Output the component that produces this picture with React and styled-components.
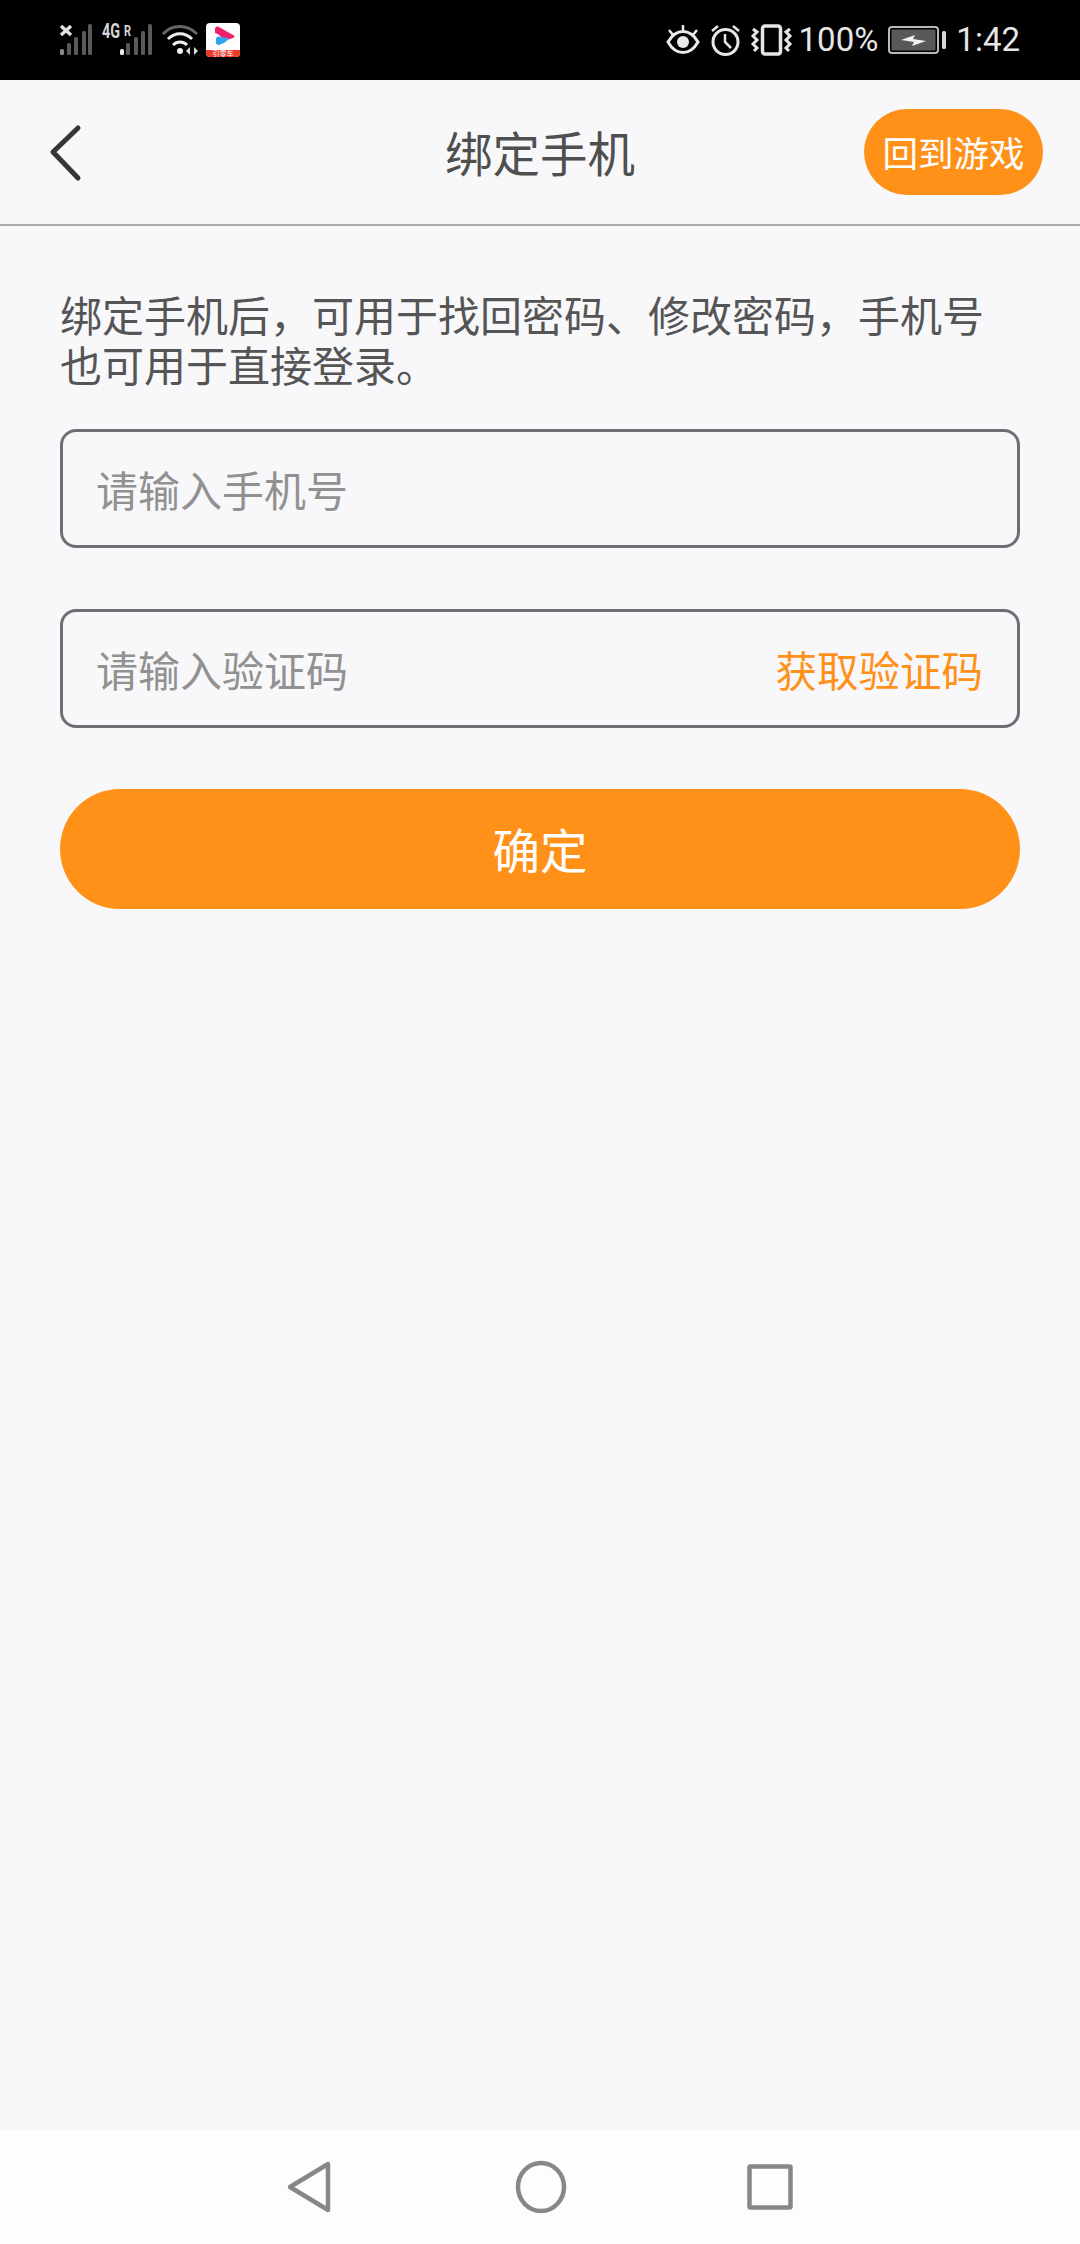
import React from "react"
import styled, { createGlobalStyle } from "styled-components"

const GlobalStyle = createGlobalStyle`
  html, body { margin: 0; padding: 0; background: #f8f8fb; }
  * { box-sizing: border-box; }
  body { font-family: "Noto Sans CJK SC", "Noto Sans", sans-serif; }
`

const ORANGE = "#ff9119"

const Page = styled.div`
  width: 1080px;
  height: 2244px;
  display: flex;
  flex-direction: column;
  background: #f8f8fb;
`

const StatusBar = styled.div`
  height: 80px;
  flex: none;
  background: #000;
  padding: 0 60px;
  display: flex;
  align-items: center;
  justify-content: space-between;
  color: #e6e6e6;
  font-family: Roboto, "Liberation Sans", sans-serif;
  font-size: 33px;
`

const StatusGroup = styled.div`
  display: flex;
  align-items: center;
  gap: 10px;
`

const Percent = styled.span`
  margin-left: -3px;
  line-height: 40px;
`

const Clock = styled.span`
  line-height: 40px;
`

const Glyph = styled.svg`
  display: block;
  flex: none;
  overflow: visible;
`

const BadgeGlyph = styled(Glyph)`
  margin-left: -3px;
`

const Header = styled.header`
  height: 146px;
  flex: none;
  display: grid;
  grid-template-columns: 1fr auto 1fr;
  align-items: center;
  padding: 0 37px;
  border-bottom: 2px solid #adadad;
`

const BackButton = styled.button`
  justify-self: start;
  margin-left: 11px;
  padding: 0;
  border: none;
  background: none;
  display: block;
`

const Title = styled.h1`
  margin: 0;
  font-size: 47.5px;
  font-weight: 400;
  line-height: 60px;
  color: #4f4f4f;
`

const BackToGame = styled.button`
  justify-self: end;
  width: 179px;
  height: 86px;
  border: none;
  border-radius: 43px;
  padding: 0 0 2px;
  background: ${ORANGE};
  color: #fff;
  font-family: inherit;
  font-size: 35.5px;
  white-space: nowrap;
`

const Main = styled.main`
  flex: 1;
  padding: 63px 60px 0;
`

const Intro = styled.p`
  margin: 0 0 40px;
  font-size: 42px;
  line-height: 50px;
  color: #555;
`

const Field = styled.div`
  height: 119px;
  margin-bottom: 61px;
  padding: 0 34px 0 33px;
  display: flex;
  align-items: center;
  border: 3px solid #6f6f73;
  border-radius: 16px;
`

const Input = styled.input`
  flex: 1;
  min-width: 0;
  padding: 0;
  border: none;
  outline: none;
  background: transparent;
  font-family: inherit;
  font-size: 42px;
  color: #444;
  &::placeholder { color: #919191; opacity: 1; }
`

const GetCode = styled.span`
  font-size: 41.5px;
  color: ${ORANGE};
  white-space: nowrap;
`

const Confirm = styled.button`
  display: block;
  width: 100%;
  height: 120px;
  border: none;
  border-radius: 60px;
  padding: 0 0 2px;
  background: ${ORANGE};
  color: #fff;
  font-family: inherit;
  font-size: 47.5px;
`

const NavBar = styled.nav`
  height: 114px;
  flex: none;
  background: #fdfdfd;
  display: grid;
  grid-template-columns: 286px 229px 232px 46px;
  align-items: center;
`

const NavIcon = styled.svg`
  display: block;
  grid-column: ${(p) => p.$col};
  fill: none;
  stroke: #878787;
  stroke-width: 4.5;
  stroke-linejoin: round;
`

const Bars = ({ x, dot }) => {
  const heights = [31, 24, 18, 12, 6]
  return (
    <>
      {x.map((bx, i) => (
        <rect
          key={bx}
          x={bx}
          y={31 - heights[4 - i]}
          width="4"
          height={heights[4 - i]}
          rx="1.5"
          fill={i === 0 ? dot : "#5a5a5a"}
        />
      ))}
    </>
  )
}

const SimOne = () => (
  <Glyph width="32" height="32" viewBox="0 0 32 32">
    <path d="M1 2 L11 11 M11 2 L1 11" stroke="#e0e0e0" strokeWidth="3.5" />
    <Bars x={[0, 7, 14, 22, 28]} dot="#8a8a8a" />
  </Glyph>
)

const SimTwo = () => (
  <Glyph width="50" height="32" viewBox="0 0 50 32">
    <text x="0" y="14" fontFamily="Roboto, sans-serif" fontWeight="700" fontSize="20" fill="#d8d8d8" textLength="18" lengthAdjust="spacingAndGlyphs">4G</text>
    <text x="22" y="12" fontFamily="Roboto, sans-serif" fontWeight="700" fontSize="15" fill="#d8d8d8" textLength="7" lengthAdjust="spacingAndGlyphs">R</text>
    <Bars x={[18, 24, 32, 39, 46]} dot="#e8e8e8" />
  </Glyph>
)

const Wifi = () => (
  <Glyph width="37" height="32" viewBox="0 0 37 32">
    <path d="M1 10 C10 0 25 0 35 10" stroke="#666" strokeWidth="3" fill="none" />
    <path d="M6 15 C13 8 23 8 30 15" stroke="#eee" strokeWidth="3" fill="none" />
    <path d="M11 21 C15 17 21 17 25 21" stroke="#eee" strokeWidth="3" fill="none" />
    <circle cx="18" cy="27" r="3" fill="#eee" />
    <path d="M24 27 L28 23 V31 Z M36 27 L32 23 V31 Z" fill="#ddd" />
  </Glyph>
)

const AppBadge = () => (
  <BadgeGlyph width="34" height="34" viewBox="0 0 34 34">
    <rect width="34" height="34" rx="4" fill="#fff" />
    <path d="M0 27 H34 V30 a4 4 0 0 1 -4 4 H4 a4 4 0 0 1 -4 -4 Z" fill="#ee3a2c" />
    <path d="M9 6 C9 4 11 3 13 4 L27 12 C29 13 29 14 27 15 L18 18 C16 14 13 11 9 10 Z" fill="#f01f6b" />
    <path d="M10 16 C10 14 12 13 14 14 L23 15 C21 19 16 21 13 22 C11 22 10 21 10 20 Z" fill="#30a6ee" />
    <text x="17" y="33" textAnchor="middle" fontSize="7" fill="#fff" fontFamily="'Noto Sans CJK SC', sans-serif">引零车</text>
  </BadgeGlyph>
)

const Eye = () => (
  <Glyph width="34" height="32" viewBox="0 0 34 32" fill="none" stroke="#eaeaea" strokeWidth="3">
    <path d="M2 18 C10 4 24 4 32 18 C24 32 10 32 2 18 Z" />
    <circle cx="17" cy="18" r="6" fill="#eaeaea" stroke="none" />
    <path d="M17 1 V7 M3 6 L7 11 M31 6 L27 11" strokeWidth="2.5" />
  </Glyph>
)

const Alarm = () => (
  <Glyph width="31" height="32" viewBox="0 0 31 32" fill="none" stroke="#e6e6e6" strokeWidth="3">
    <circle cx="15.5" cy="18" r="12.5" />
    <path d="M15 10 V18 L21 24" strokeWidth="2.5" />
    <path d="M2 7 L8 2 M29 7 L23 2" strokeWidth="2.5" />
  </Glyph>
)

const Vibrate = () => (
  <Glyph width="41" height="32" viewBox="0 0 41 32" fill="none" stroke="#e6e6e6" strokeWidth="3.5">
    <rect x="11.5" y="2" width="18" height="28" rx="2.5" />
    <path d="M2 5 L6 8 L2 12 L6 16 L2 20 L6 24 L3 27" strokeWidth="3" />
    <path d="M39 5 L35 8 L39 12 L35 16 L39 20 L35 24 L38 27" strokeWidth="3" />
  </Glyph>
)

const Battery = () => (
  <Glyph width="58" height="28" viewBox="0 0 58 28">
    <rect x="1" y="1" width="49" height="26" rx="3" fill="#000" stroke="#b8b8b8" strokeWidth="2" />
    <rect x="3.5" y="3.5" width="44" height="21" rx="1" fill="#585858" />
    <path d="M13 14 L27 9 L25 13 L38 15 L24 20 L26 16 Z" fill="#f2f2f2" />
    <rect x="54" y="5" width="4" height="18" rx="1.5" fill="#d8d8d8" />
  </Glyph>
)

const App = () => {
  return (
    <Page>
      <GlobalStyle />
      <StatusBar>
        <StatusGroup>
          <SimOne />
          <SimTwo />
          <Wifi />
          <AppBadge />
        </StatusGroup>
        <StatusGroup>
          <Eye />
          <Alarm />
          <Vibrate />
          <Percent>100%</Percent>
          <Battery />
          <Clock>1:42</Clock>
        </StatusGroup>
      </StatusBar>

      <Header>
        <BackButton aria-label="返回">
          <Glyph width="36" height="60" viewBox="0 0 36 60" fill="none">
            <path d="M30 6 L5 30 L30 56" stroke="#363636" strokeWidth="5" strokeLinecap="round" strokeLinejoin="round" />
          </Glyph>
        </BackButton>
        <Title>绑定手机</Title>
        <BackToGame>回到游戏</BackToGame>
      </Header>

      <Main>
        <Intro>绑定手机后，可用于找回密码、修改密码，手机号也可用于直接登录。</Intro>
        <Field>
          <Input placeholder="请输入手机号" />
        </Field>
        <Field>
          <Input placeholder="请输入验证码" />
          <GetCode>获取验证码</GetCode>
        </Field>
        <Confirm>确定</Confirm>
      </Main>

      <NavBar>
        <NavIcon $col={2} width="46" height="54" viewBox="0 0 46 54">
          <path d="M42 4 V50 L4 27 Z" />
        </NavIcon>
        <NavIcon $col={3} width="52" height="54" viewBox="0 0 52 54">
          <ellipse cx="26" cy="27" rx="23" ry="24" />
        </NavIcon>
        <NavIcon $col={4} width="46" height="46" viewBox="0 0 46 46">
          <rect x="2.5" y="2.5" width="41" height="41" rx="1" />
        </NavIcon>
      </NavBar>
    </Page>
  )
}

export default App
